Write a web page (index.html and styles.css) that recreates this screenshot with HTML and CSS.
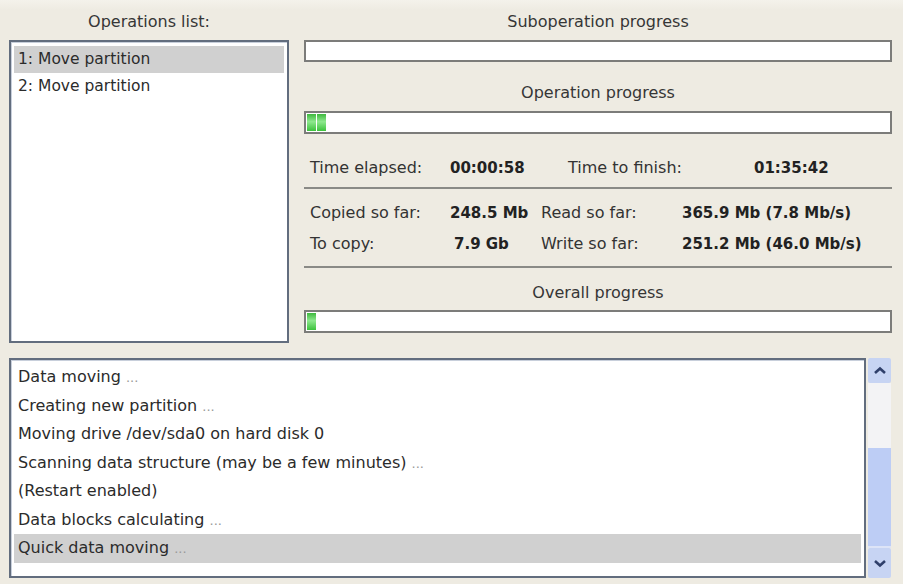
FILE: index.html
```html
<!DOCTYPE html>
<html lang="en">
<head>
    <meta charset="UTF-8">
    <title>Operations progress</title>
    <link rel="stylesheet" href="styles.css">
</head>
<body>

    <div class="window">

        <!-- Top area -->
        <div class="top">

            <div class="ops">
                <div class="caption">Operations list:</div>
                <div class="list ops-list">
                    <div class="row selected">1: Move partition</div>
                    <div class="row">2: Move partition</div>
                </div>
            </div>

            <div class="progress">
                <div class="caption">Suboperation progress</div>
                <div class="bar"></div>

                <div class="caption cap-op">Operation progress</div>
                <div class="bar bar-op">
                    <span class="seg"></span><span class="seg"></span>
                </div>

                <div class="stats time">
                    <span>Time elapsed:</span>
                    <b>00:00:58</b>
                    <span>Time to finish:</span>
                    <b>01:35:42</b>
                </div>

                <div class="sep"></div>

                <div class="stats data">
                    <span>Copied so far:</span>
                    <b>248.5 Mb</b>
                    <span>Read so far:</span>
                    <b>365.9 Mb (7.8 Mb/s)</b>
                </div>
                <div class="stats data second">
                    <span>To copy:</span>
                    <b class="mid">7.9 Gb</b>
                    <span>Write so far:</span>
                    <b>251.2 Mb (46.0 Mb/s)</b>
                </div>

                <div class="sep sep2"></div>

                <div class="caption cap-all">Overall progress</div>
                <div class="bar bar-all">
                    <span class="seg"></span>
                </div>
            </div>
        </div>

        <!-- Log -->
        <div class="bottom">
            <div class="list log">
                <div class="line">Data moving <i>...</i></div>
                <div class="line">Creating new partition <i>...</i></div>
                <div class="line">Moving drive /dev/sda0 on hard disk 0</div>
                <div class="line">Scanning data structure (may be a few minutes) <i>...</i></div>
                <div class="line">(Restart enabled)</div>
                <div class="line">Data blocks calculating <i>...</i></div>
                <div class="line selected">Quick data moving <i>...</i></div>
            </div>
            <div class="scrollbar">
                <div class="sb-btn">
                    <svg width="14" height="10" viewBox="0 0 14 10"><path d="M2 7 L7 2.5 L12 7" fill="none" stroke="#2f3f6a" stroke-width="2.6"/></svg>
                </div>
                <div class="sb-track"></div>
                <div class="sb-thumb"></div>
                <div class="sb-btn">
                    <svg width="14" height="10" viewBox="0 0 14 10"><path d="M2 3 L7 7.5 L12 3" fill="none" stroke="#2f3f6a" stroke-width="2.6"/></svg>
                </div>
            </div>
        </div>

    </div>

</body>
</html>
```

FILE: styles.css
```css
* { margin: 0; padding: 0; box-sizing: border-box; }
body {
    font-family: "DejaVu Sans", Verdana, sans-serif;
    font-size: 16px;
    color: #2b2b2b;
    background: linear-gradient(#f4f2eb 0, #eeebe2 10px);
    width: 903px;
    height: 584px;
    overflow: hidden;
}

.window {
    padding: 0 0 0 9px;
}

/* Top */
.top {
    display: flex;
    gap: 15px;
}

.caption {
    height: 20px;
    line-height: 20px;
    margin-top: 12px;
    text-align: center;
    color: #363636;
}

.ops { width: 280px; }

.list {
    background: #fff;
    border: 2px solid #626d7e;
    box-shadow: inset 1px 1px 0 #c8cfdb;
}
.ops-list {
    margin-top: 8px;
    height: 303px;
    padding: 4px 3px;
}
.row {
    height: 27px;
    line-height: 27px;
    padding-left: 4px;
    font-size: 15.5px;
}
.selected { background: #d0d0d0; }

/* Progress */
.progress { width: 588px; }

.bar {
    margin-top: 8px;
    height: 22px;
    background: #fff;
    border: 2px solid #7c7c7a;
    padding: 1px 0 1px 1px;
    display: flex;
    gap: 1px;
}
.cap-op { margin-top: 21px; }
.bar-op { height: 23px; }
.cap-all { margin-top: 15px; }
.bar-all { margin-top: 7px; height: 23px; }

.seg {
    width: 9px;
    height: 100%;
    background: linear-gradient(#3eb83e, #8ee88e 45%, #3cc23c);
}

.stats {
    display: grid;
    height: 24px;
    line-height: 24px;
    padding-left: 6px;
    font-size: 16px;
}
.stats span { color: #333; }
.stats b { color: #222; font-size: 15px; }
.time {
    margin-top: 22px;
    grid-template-columns: 140px 118px 186px auto;
}
.data {
    margin-top: 12px;
    grid-template-columns: 140px 91px 141px auto;
}
.data.second { margin-top: 7px; }
.mid { padding-left: 4px; }

.sep {
    margin-top: 7px;
    height: 2px;
    background: #8a8a86;
}
.sep2 { margin-top: 10px; }

/* Log */
.bottom {
    display: flex;
    margin-top: 15px;
    height: 220px;
}
.log {
    width: 857px;
    padding: 3px 3px;
}
.line {
    height: 28.5px;
    line-height: 28.5px;
    padding-left: 4px;
    white-space: nowrap;
}
.line i {
    font-style: normal;
    color: #999;
    font-size: 13px;
}

.scrollbar {
    margin-left: 2px;
    width: 23px;
    display: flex;
    flex-direction: column;
}
.sb-btn {
    height: 25px;
    background: #c7d4f3;
    border-radius: 2px;
    display: flex;
    align-items: center;
    justify-content: center;
}
.sb-track {
    height: 65px;
    background: #f3f3f5;
}
.sb-thumb {
    height: 100px;
    background: #bdcdf5;
    border-bottom: 2px solid #dde4f7;
}
.sb-btn:last-child { height: 30px; }
```
